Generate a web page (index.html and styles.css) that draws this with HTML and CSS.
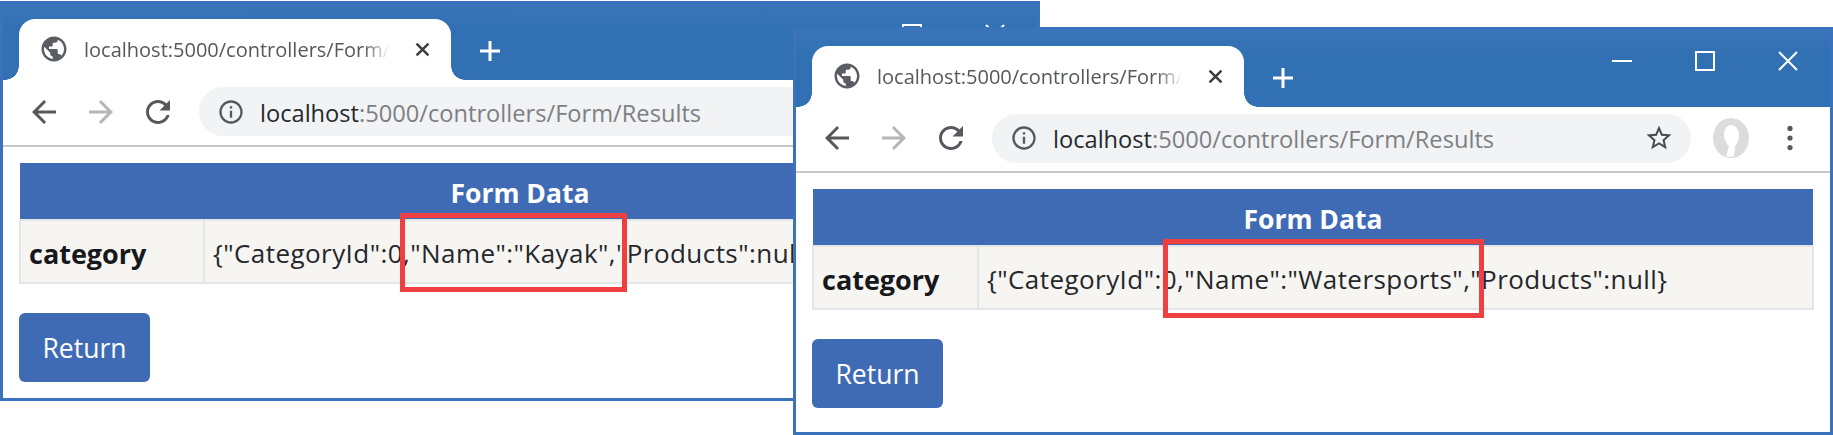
FILE: index.html
```html
<!DOCTYPE html>
<html lang="en">
<head>
<meta charset="utf-8">
<title>Form Data</title>
<link rel="stylesheet" href="styles.css">
</head>
<body>
<svg class="defs" aria-hidden="true">
  <symbol id="i-globe" viewBox="0 0 24 24"><path d="M12 2C6.48 2 2 6.48 2 12s4.48 10 10 10 10-4.48 10-10S17.52 2 12 2zm-1 17.93c-3.95-.49-7-3.85-7-7.93 0-.62.08-1.21.21-1.79L9 15v1c0 1.1.9 2 2 2v1.93zm6.9-2.54c-.26-.81-1-1.39-1.9-1.39h-1v-3c0-.55-.45-1-1-1H8v-2h2c.55 0 1-.45 1-1V7h2c1.1 0 2-.9 2-2v-.41c2.93 1.19 5 4.06 5 7.41 0 2.08-.8 3.97-2.1 5.39z"/></symbol>
  <symbol id="i-x" viewBox="0 0 20 20"><path d="M3 3l14 14M17 3L3 17" fill="none" stroke="currentColor" stroke-width="3"/></symbol>
  <symbol id="i-plus" viewBox="0 0 22 22"><path d="M11 1v20M1 11h20" fill="none" stroke="currentColor" stroke-width="3"/></symbol>
  <symbol id="i-arrow" viewBox="0 0 24 24"><path d="M20 11H7.83l5.59-5.59L12 4l-8 8 8 8 1.41-1.41L7.83 13H20v-2z"/></symbol>
  <symbol id="i-reload" viewBox="0 0 24 24"><path d="M17.65 6.35C16.2 4.9 14.21 4 12 4c-4.42 0-7.99 3.58-7.99 8s3.57 8 7.99 8c3.73 0 6.84-2.55 7.73-6h-2.08c-.82 2.33-3.04 4-5.65 4-3.31 0-6-2.69-6-6s2.69-6 6-6c1.66 0 3.14.69 4.22 1.78L13 11h7V4l-2.35 2.35z"/></symbol>
  <symbol id="i-info" viewBox="0 0 24 24"><path d="M11 7h2v2h-2zm0 4h2v6h-2zm1-9C6.48 2 2 6.48 2 12s4.48 10 10 10 10-4.48 10-10S17.52 2 12 2zm0 18c-4.41 0-8-3.59-8-8s3.59-8 8-8 8 3.59 8 8-3.59 8-8 8z"/></symbol>
  <symbol id="i-star" viewBox="0 0 24 24"><path d="M22 9.24l-7.19-.62L12 2 9.19 8.63 2 9.24l5.46 4.73L5.82 21 12 17.27 18.18 21l-1.63-7.03L22 9.24zM12 15.4l-3.76 2.27 1-4.28-3.32-2.88 4.38-.38L12 6.1l1.71 4.04 4.38.38-3.32 2.88 1 4.28L12 15.4z"/></symbol>
  <symbol id="i-avatar" viewBox="0 0 36 40"><ellipse cx="18" cy="20" rx="18" ry="20" fill="#dcdcdc"/><path d="M18 7c-4 0-7 4-7 10 0 5 2 8 5 11l-3 10c2 1 7 1 8 0l1-10c3-3 4-6 4-11 0-6-4-10-8-10z" fill="#fff"/></symbol>
  <symbol id="i-kebab" viewBox="0 0 8 30"><circle cx="4" cy="4" r="3"/><circle cx="4" cy="15" r="3"/><circle cx="4" cy="26" r="3"/></symbol>
  <symbol id="i-min" viewBox="0 0 20 20"><path d="M0 10h20" fill="none" stroke="currentColor" stroke-width="2"/></symbol>
  <symbol id="i-max" viewBox="0 0 20 20"><path d="M1 1h18v18H1z" fill="none" stroke="currentColor" stroke-width="2"/></symbol>
  <symbol id="i-close" viewBox="0 0 20 20"><path d="M1 1l18 18M19 1L1 19" fill="none" stroke="currentColor" stroke-width="2"/></symbol>
</svg>

<div class="desk">
  <section class="win win-a">
    <header class="strip">
      <div class="tab">
        <svg class="ico-globe"><use href="#i-globe"/></svg>
        <span class="tab-title">localhost:5000/controllers/Form/Results</span>
        <svg class="ico-x"><use href="#i-x"/></svg>
      </div>
      <svg class="ico-plus"><use href="#i-plus"/></svg>
      <div class="controls">
        <svg class="ico-ctl"><use href="#i-min"/></svg>
        <svg class="ico-ctl"><use href="#i-max"/></svg>
        <svg class="ico-ctl"><use href="#i-close"/></svg>
      </div>
    </header>
    <nav class="toolbar">
      <svg class="ico-nav"><use href="#i-arrow"/></svg>
      <svg class="ico-nav ico-fwd"><use href="#i-arrow"/></svg>
      <svg class="ico-nav"><use href="#i-reload"/></svg>
      <div class="omni">
        <svg class="ico-info"><use href="#i-info"/></svg>
        <span class="url"><span class="host">localhost</span>:5000/controllers/Form/Results</span>
        <svg class="ico-star"><use href="#i-star"/></svg>
      </div>
      <svg class="ico-avatar"><use href="#i-avatar"/></svg>
      <svg class="ico-kebab"><use href="#i-kebab"/></svg>
    </nav>
    <main class="content">
      <table class="data">
        <colgroup><col class="col-a"><col></colgroup>
        <thead><tr><th colspan="2">Form Data</th></tr></thead>
        <tbody><tr><td class="key">category</td><td class="val">{"CategoryId":0,"Name":"Kayak","Products":null}</td></tr></tbody>
      </table>
      <a class="btn">Return</a>
    </main>
  </section>

  <section class="win win-b">
    <header class="strip">
      <div class="tab">
        <svg class="ico-globe"><use href="#i-globe"/></svg>
        <span class="tab-title">localhost:5000/controllers/Form/Results</span>
        <svg class="ico-x"><use href="#i-x"/></svg>
      </div>
      <svg class="ico-plus"><use href="#i-plus"/></svg>
      <div class="controls">
        <svg class="ico-ctl"><use href="#i-min"/></svg>
        <svg class="ico-ctl"><use href="#i-max"/></svg>
        <svg class="ico-ctl"><use href="#i-close"/></svg>
      </div>
    </header>
    <nav class="toolbar">
      <svg class="ico-nav"><use href="#i-arrow"/></svg>
      <svg class="ico-nav ico-fwd"><use href="#i-arrow"/></svg>
      <svg class="ico-nav"><use href="#i-reload"/></svg>
      <div class="omni">
        <svg class="ico-info"><use href="#i-info"/></svg>
        <span class="url"><span class="host">localhost</span>:5000/controllers/Form/Results</span>
        <svg class="ico-star"><use href="#i-star"/></svg>
      </div>
      <svg class="ico-avatar"><use href="#i-avatar"/></svg>
      <svg class="ico-kebab"><use href="#i-kebab"/></svg>
    </nav>
    <main class="content">
      <table class="data">
        <colgroup><col class="col-b"><col></colgroup>
        <thead><tr><th colspan="2">Form Data</th></tr></thead>
        <tbody><tr><td class="key">category</td><td class="val">{"CategoryId":0,"Name":"Watersports","Products":null}</td></tr></tbody>
      </table>
      <a class="btn">Return</a>
    </main>
  </section>

  <div class="mark mark-a"></div>
  <div class="mark mark-b"></div>
</div>
</body>
</html>
```

FILE: styles.css
```css
* { box-sizing: border-box; }
html, body { margin: 0; padding: 0; background: #fff; }
body { font-family: "Open Sans", "Noto Sans", sans-serif; overflow: hidden; }
.defs { position: absolute; width: 0; height: 0; }

.desk { position: relative; width: 1833px; height: 435px; overflow: hidden; background: #fff; }

.win {
  position: absolute;
  width: 1040px;
  border: 3px solid #3a72bb;
  background: #fff;
  display: flex;
  flex-direction: column;
}
.win-a { left: 0; top: 1px; height: 400px; }
.win-b { left: 793px; top: 27px; height: 408px; }

/* tab strip */
.strip {
  height: 76px;
  padding: 15px 0 0 16px;
  background: linear-gradient(#3a74b8, #3270b4 22px);
  display: flex;
  align-items: flex-start;
  flex: none;
}
.win-b .strip { height: 77px; padding-top: 16px; }
.win-b .toolbar { height: 66px; }
.tab {
  position: relative;
  width: 432px;
  height: 61px;
  background: #fff;
  border-radius: 16px 16px 0 0;
  display: flex;
  align-items: center;
  padding: 0 20px 0 20px;
  flex: none;
}
.tab::before, .tab::after {
  content: "";
  position: absolute;
  bottom: 0;
  width: 14px;
  height: 14px;
}
.tab::before { left: -14px; background: radial-gradient(circle at 0 0, #3270b4 13.5px, #fff 14px); }
.tab::after { right: -14px; background: radial-gradient(circle at 100% 0, #3270b4 13.5px, #fff 14px); }
.ico-globe { width: 30px; height: 30px; fill: #5a5d61; flex: none; margin-top: -2px; }
.tab-title {
  flex: 1;
  min-width: 0;
  margin-left: 15px;
  font-size: 20px;
  line-height: 28px;
  color: #55585c;
  white-space: nowrap;
  overflow: hidden;
  -webkit-mask-image: linear-gradient(to right, #000 88%, transparent 96%);
  mask-image: linear-gradient(to right, #000 88%, transparent 96%);
}
.ico-x { width: 17px; height: 17px; margin-left: 12px; color: #3c3f43; flex: none; }
.ico-plus { width: 22px; height: 22px; margin: 21px 0 0 28px; color: #fff; flex: none; }
.controls { margin-left: auto; display: flex; gap: 63px; padding: 5px 32px 0 0; color: #fff; }
.ico-ctl { width: 20px; height: 20px; flex: none; }

/* toolbar */
.toolbar {
  height: 67px;
  flex: none;
  background: #fff;
  border-bottom: 2px solid #c6c7c8;
  display: flex;
  align-items: center;
  padding: 0 0 2px 23px;
}
.ico-nav { width: 36px; height: 36px; fill: #55585c; flex: none; margin-right: 21px; }
.ico-fwd { fill: #b4b6b8; transform: scaleX(-1); }
.omni {
  width: 699px;
  height: 49px;
  margin-left: 2px;
  flex: none;
  background: #f1f3f4;
  border-radius: 25px;
  display: flex;
  align-items: center;
  padding: 0 17px 0 18px;
}
.ico-info { width: 28px; height: 28px; fill: #55585c; flex: none; }
.url { flex: 1; margin-left: 15px; padding-top: 2px; font-size: 23.65px; line-height: 30px; color: #7d8083; white-space: nowrap; }
.host { color: #26292d; }
.ico-star { width: 30px; height: 30px; fill: #4a4c50; flex: none; }
.ico-avatar { width: 36px; height: 40px; margin-left: 22px; flex: none; }
.ico-kebab { width: 8px; height: 26px; margin-left: 37px; fill: #55585c; flex: none; }

/* page */
.content { flex: 1; padding: 16px 16px 0; }
.data { width: 100%; border-collapse: collapse; table-layout: fixed; font-size: 26px; letter-spacing: 0.44px; }
.col-a { width: 184px; }
.col-b { width: 165px; }
.data th {
  height: 57px;
  padding: 3px 0 0;
  background: #3f6bb5;
  color: #fff;
  font-weight: 700;
  font-size: 26.5px;
  letter-spacing: 0;
  text-align: center;
}
.data td {
  height: 63px;
  padding: 3px 8px 0;
  background: #f6f5f1;
  border: 2px solid #e3e5e8;
  color: #25272b;
  white-space: nowrap;
  overflow: hidden;
}
.data .key { font-weight: 700; font-size: 27px; letter-spacing: 0; color: #16181c; }
.btn {
  display: flex;
  align-items: center;
  justify-content: center;
  width: 131px;
  height: 69px;
  margin-top: 29px;
  background: #3f6bb5;
  color: #fff;
  border-radius: 6px;
  font-size: 26.5px;
}

/* highlight boxes */
.mark { position: absolute; height: 79px; border: 5px solid #ee4040; }
.mark-a { left: 400px; top: 213px; width: 227px; }
.mark-b { left: 1163px; top: 239px; width: 321px; }
```
